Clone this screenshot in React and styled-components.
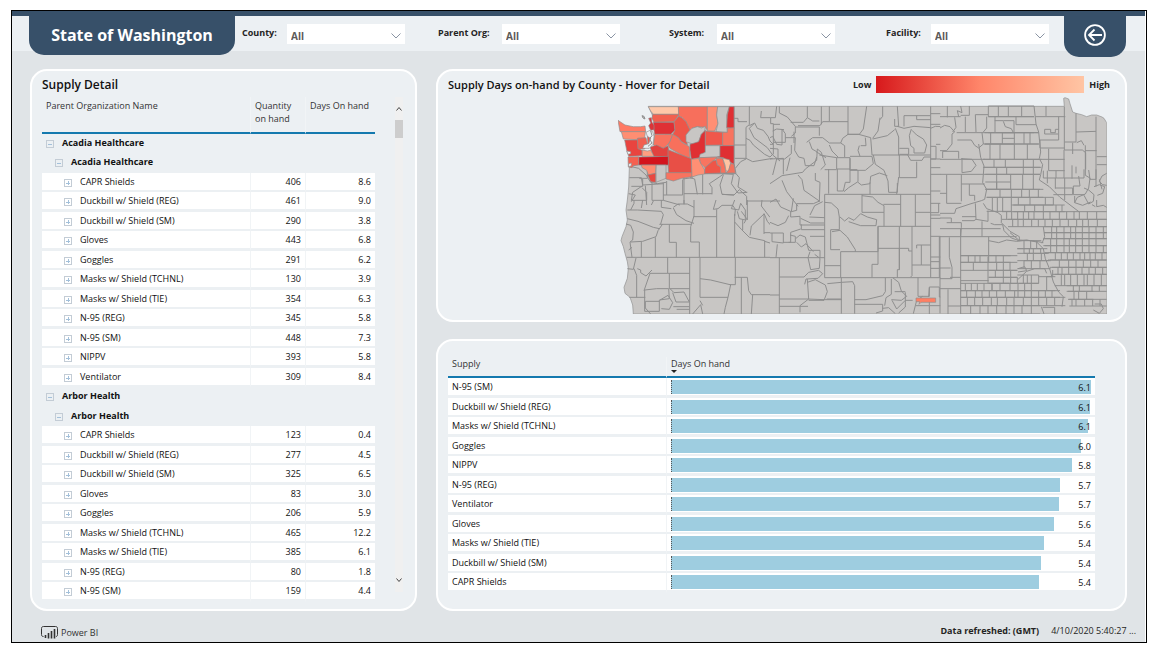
import React from "react";
import styled, { createGlobalStyle } from "styled-components";

const GlobalStyle = createGlobalStyle`
  *, *::before, *::after { box-sizing: border-box; }
  body {
    margin: 0;
    background: #fff;
    color: #252423;
    font-family: "Open Sans", "Noto Sans", sans-serif;
    font-size: 9px;
    line-height: 13px;
  }
  button, select { font: inherit; color: inherit; }
`;

const Frame = styled.div`
  margin: 10px 14px 17px 11px;
  padding-right: 1px;
  border: 1px solid #000;
  background: #fff;
`;

const Report = styled.div`
  background: #e0e4e7;
`;

const Header = styled.header`
  display: flex;
  align-items: flex-start;
  height: 40px;
  padding: 0 19px 0 17px;
  border-top: 5px solid #375069;
  background: #ecf0f3;
`;

const TitleTab = styled.h1`
  flex: 0 0 206px;
  margin: 0;
  border-radius: 0 0 15px 15px;
  background: #375069;
  color: #fff;
  font-size: 16px;
  font-weight: 700;
  line-height: 39px;
  text-align: center;
`;

const Filters = styled.form`
  flex: 1;
  display: grid;
  grid-template-columns: 196fr 231fr 217fr 178fr;
  padding-left: 7px;
`;

const Filter = styled.div`
  display: flex;
  align-items: flex-start;
  padding-top: 8px;
`;

const FilterLabel = styled.label`
  flex: 0 0 ${(p) => p.$width}px;
  padding-top: 2px;
  font-weight: 700;
  white-space: nowrap;
`;

const SelectBox = styled.div`
  position: relative;
  flex: 0 0 118px;

  select {
    display: block;
    width: 100%;
    height: 20px;
    padding: 4px 4px 0;
    border: 0;
    border-radius: 0;
    appearance: none;
    background: #fff;
    color: #5c5a58;
    font-size: 10px;
    font-weight: 700;
  }

  svg {
    position: absolute;
    top: 9px;
    right: 4px;
    pointer-events: none;
  }
`;

const BackTab = styled.button`
  flex: 0 0 62px;
  display: flex;
  justify-content: center;
  align-items: center;
  height: 41px;
  padding: 0 0 3px;
  border: 0;
  border-radius: 0 0 15px 15px;
  background: #375069;
`;

const Main = styled.main`
  display: grid;
  grid-template-columns: minmax(0, 387fr) minmax(0, 691fr);
  gap: 19px;
  padding: 18px 18px 0;
`;

const Column = styled.div`
  display: flex;
  flex-direction: column;
  gap: 17px;
`;

const Panel = styled.section`
  padding: ${(p) => p.$pad};
  border: 2px solid #fff;
  border-radius: 17px;
  background: #ecf0f3;
`;

const PanelTitle = styled.h2`
  margin: 0;
  color: #111;
  font-size: ${(p) => p.$size}px;
  font-weight: 600;
  line-height: 16px;
`;

const ScrollArea = styled.div`
  display: flex;
  gap: 20px;
  margin-top: 4px;
`;

const DataTable = styled.table`
  width: 100%;
  table-layout: fixed;
  border-collapse: separate;
  border-spacing: 0;
  color: #111;

  th {
    padding: ${(p) => p.$headPad};
    border-bottom: 2px solid #1479ae;
    color: #333;
    font-weight: 400;
    text-align: left;
    vertical-align: top;
  }

  th:not(:last-child), td:not(:last-child) {
    border-right: 1px solid #f1f4f6;
  }

  td {
    padding: 0 4px;
    border-bottom: 3px solid #ecf0f3;
    background: #fff;
    line-height: 17px;
  }

  tr:nth-child(${(p) => p.$short}) td {
    border-bottom-width: 2px;
  }
`;

const GroupRow = styled.tr`
  font-weight: 700;

  && td {
    background: #ecf0f3;
    border-right-color: #ecf0f3;
  }
`;

const NumberCell = styled.td`
  text-align: right;
`;

const TreeName = styled.div`
  display: flex;
  align-items: center;
  gap: 8px;
  padding-left: ${(p) => (p.$level - 1) * 9}px;
  white-space: nowrap;
`;

const Toggle = styled.button`
  display: flex;
  width: 8px;
  height: 8px;
  margin-top: 3px;
  padding: 0;
  border: 0;
  background: none;
`;

const ScrollBar = styled.div`
  flex: 0 0 8px;
  display: flex;
  flex-direction: column;
  margin-bottom: 10px;
  background: #f0f0f0;
`;

const ScrollButton = styled.button`
  display: flex;
  align-items: center;
  justify-content: center;
  height: 23px;
  padding: 0;
  border: 0;
  background: none;
`;

const ScrollTrack = styled.div`
  flex: 1;
`;

const ScrollThumb = styled.div`
  height: 18px;
  background: #cdcdcd;
`;

const MapHeader = styled.div`
  display: flex;
  justify-content: space-between;
  align-items: center;
  height: 17px;
  margin-bottom: 4px;
  padding-right: 15px;
`;

const Legend = styled.div`
  display: flex;
  align-items: center;
  gap: 5px;
  color: #222;
  font-weight: 700;
`;

const LegendRamp = styled.div`
  width: 208px;
  height: 17px;
  background: linear-gradient(90deg, #d7191c, #ff866a 50%, #ffc5a4);
`;

const MapDrawing = styled.svg`
  display: block;
  width: 489px;
  max-width: 100%;
  margin-left: auto;
  margin-right: 18px;
`;

const SortedLabel = styled.span`
  position: relative;

  &::after {
    content: "";
    position: absolute;
    left: 0;
    top: 13px;
    border: 3px solid transparent;
    border-top-color: #222;
    border-bottom: 0;
  }
`;

const BarCell = styled.td`
  position: relative;
`;

const BarTrack = styled.div`
  height: 17px;
  padding: 2px 0 1px;
`;

const Bar = styled.div`
  height: 14px;
  border-left: 1px dotted #555;
  background: #9ecde0;
`;

const BarValue = styled.span`
  position: absolute;
  top: 1px;
  right: 4px;
`;

const Footer = styled.footer`
  display: flex;
  justify-content: space-between;
  align-items: center;
  height: 31px;
  padding: 7px 9px 0 29px;
`;

const Brand = styled.a`
  display: flex;
  align-items: center;
  gap: 3px;
  padding-top: 4px;
  color: #333;
  text-decoration: none;
`;

const Refreshed = styled.div`
  display: flex;
  gap: 12px;
`;

const filters = [
  ["County:", 45],
  ["Parent Org:", 64],
  ["System:", 48],
  ["Facility:", 45],
];

const detail = [
  ["Acadia Healthcare", [
    ["CAPR Shields", "406", "8.6"],
    ["Duckbill w/ Shield (REG)", "461", "9.0"],
    ["Duckbill w/ Shield (SM)", "290", "3.8"],
    ["Gloves", "443", "6.8"],
    ["Goggles", "291", "6.2"],
    ["Masks w/ Shield (TCHNL)", "130", "3.9"],
    ["Masks w/ Shield (TIE)", "354", "6.3"],
    ["N-95 (REG)", "345", "5.8"],
    ["N-95 (SM)", "448", "7.3"],
    ["NIPPV", "393", "5.8"],
    ["Ventilator", "309", "8.4"],
  ]],
  ["Arbor Health", [
    ["CAPR Shields", "123", "0.4"],
    ["Duckbill w/ Shield (REG)", "277", "4.5"],
    ["Duckbill w/ Shield (SM)", "325", "6.5"],
    ["Gloves", "83", "3.0"],
    ["Goggles", "206", "5.9"],
    ["Masks w/ Shield (TCHNL)", "465", "12.2"],
    ["Masks w/ Shield (TIE)", "385", "6.1"],
    ["N-95 (REG)", "80", "1.8"],
    ["N-95 (SM)", "159", "4.4"],
  ]],
];

const supplies = [
  ["N-95 (SM)", "6.1", 100],
  ["Duckbill w/ Shield (REG)", "6.1", 99.8],
  ["Masks w/ Shield (TCHNL)", "6.1", 99.3],
  ["Goggles", "6.0", 97.6],
  ["NIPPV", "5.8", 95.5],
  ["N-95 (REG)", "5.7", 92.6],
  ["Ventilator", "5.7", 92.4],
  ["Gloves", "5.6", 91.3],
  ["Masks w/ Shield (TIE)", "5.4", 88.8],
  ["Duckbill w/ Shield (SM)", "5.4", 88.2],
  ["CAPR Shields", "5.4", 87.7],
];

/* Washington counties: fill and outline */
const GRAY = "#c8c6c4";
const LINE = "#8e8e8e";
const counties = [
  ["#ffc8a9", "115,35 205,35 208,58 130,58 122,48"],
  ["#f2604f", "128,58 208,58 192,80 132,82 126,70"],
  ["#df3035", "130,82 192,82 195,105 182,118 134,118 131,100"],
  ["#f76f5c", "205,35 292,35 292,105 286,97 262,95 246,100 240,108 228,80 216,67 206,64"],
  ["#ee5548", "192,80 206,64 216,68 228,80 240,106 228,120 232,150 215,140 205,128 188,118 195,105"],
  ["#ff8f74", "292,35 323,35 320,60 324,85 314,108 292,108"],
  [GRAY, "323,35 358,35 350,60 352,112 318,110 324,85 320,60"],
  ["#df2f33", "358,35 372,35 372,100 350,98 352,60"],
  [GRAY, "228,120 240,106 246,100 262,95 275,99 286,94 284,108 274,118 266,140 250,148 228,140"],
  ["#df2f33", "286,106 286,170 268,188 244,193 240,165 240,148 266,140 274,118"],
  ["#f0574b", "286,108 338,112 338,150 286,151"],
  ["#f8735f", "338,112 352,112 352,100 372,98 372,152 338,152"],
  [GRAY, "286,152 330,152 330,186 268,188 270,178 286,172"],
  ["#df2f33", "330,152 372,152 372,208 358,200 340,188 322,186 330,184"],
  ["#f8735f", "134,118 182,118 188,118 180,140 172,150 160,160 130,150"],
  ["#e2423f", "120,156 140,150 160,160 174,152 178,180 172,185 130,184"],
  ["#f8705c", "188,118 205,128 215,142 238,155 240,190 215,180 180,160 174,150 180,140"],
  ["#e84f46", "174,164 215,180 244,191 246,234 176,234 174,205"],
  ["#d3141d", "86,186 175,184 175,210 86,210"],
  ["#ff9e80", "96,165 112,168 122,166 132,184 96,184"],
  [GRAY, "138,210 168,210 168,250 138,262"],
  ["#ff8c72", "94,210 138,210 136,235 115,240 110,226 96,218"],
  ["#e84840", "113,240 137,235 137,262 122,260"],
  ["#f8735f", "168,233 246,233 246,245 215,250 190,258 168,252"],
  ["#ff8f74", "244,193 266,190 272,205 284,225 284,237 264,240 246,246"],
  ["#f87460", "268,188 322,186 308,200 285,218 272,205"],
  ["#ef5548", "285,218 308,198 318,195 322,210 332,215 332,234 284,236"],
  ["#f8705c", "318,190 338,190 345,215 348,234 332,234 332,215 322,210"],
  ["#ffc3a2", "338,190 358,194 362,205 356,228 348,228 345,210"],
  ["#f4705c", "362,205 372,208 376,234 348,234 356,226"],
  ["#ff7a64", "24,76 45,90 70,95 92,95 105,93 107,110 30,110"],
  ["#ff8e72", "34,110 106,110 104,130 84,130 82,134 40,132"],
  ["#e9443f", "44,135 84,135 84,160 96,166 96,182 56,184 50,165"],
  ["#f25f50", "82,130 108,128 112,145 104,162 84,162"],
  ["#f0564b", "112,122 126,118 128,145 114,150"],
  ["#f5604f", "54,186 86,185 86,210 70,212 66,218 55,216"],
  ["#dc3438", "116,70 124,68 126,82 132,90 132,104 122,106 116,92 122,84"],
];

const sound = [
  "120,106 128,110 132,124 129,148 118,160 98,160 102,150 116,146 122,130 112,124 108,112 116,108",
  "50,168 62,170 62,176 54,178",
  "56,206 64,204 64,212 56,216",
];

/* county lines of the northern coast and Idaho panhandle */
const northwestLines = `
M372,34V206L378,236H284
M372,70h12v10h27 M418,34v55l-10,8v55 M408,150h-36 M408,152v38h-34
M418,92l16,-8 8,16 18,6 14,18 6,14 10,10 v30 M480,148h10v-62h-8v-18h-30l2,-20 M500,34l-4,34h-14 M510,88h-20
M408,130l12,6 10,14 34,28 16,8 8,-8 M432,86l-14,14 14,28 40,30 16,22
M408,190l20,10 60,-10 M376,220l16,-20 16,-8 M488,180l22,18
M60,214l26,6 22,20 14,22 20,4 26,-4 M88,250h24v-24 M58,248h36l4,22 64,-4
M64,274h34v-22 M98,272l-30,20 -4,24h46v-24l-14,-14 M106,272l4,58 M126,264v52h34v-50 M160,300h58v-46 M170,258v42
M218,252l30,-4 M222,248v80 M222,296h84 M240,248l14,4 8,46 M278,238v60 M306,298v-20l-8,-12 30,-20 14,-10 28,2
M340,240l-10,30 6,28 36,2 16,-16 22,20v26 M370,238l-6,28 20,28 28,-2 M372,300l-36,-2 M412,318h98
M378,236l10,12 -4,28 26,16 M160,316l50,14 M56,296l20,4 M76,300l-12,20 M130,318l-6,12`;

/* Oregon, northern California, Nevada and southern Idaho */
const southwestLines = `
M50,172H643 M52,30h30l72,4 6,10 -8,28 M52,56l32,8 46,18 18,4 M72,0v10l-10,20 M98,0l-4,24 M154,0v22l30,4
M48,72l14,4 8,20 -2,24 -8,6 M62,126l36,-2 40,-14 6,-18 14,-20 M94,126v46 M136,112v60 M60,126l6,46 M56,150l10,-8
M148,73h96 M178,73v54h21v45 M252,48l-10,32v46h26v46 M190,22l14,-10h28l20,10 M190,24l10,20 28,18 24,8 M252,0v50h68
M222,0v12 M318,0l-8,28 14,-2 12,-10h32l8,12 -2,20 M320,28v144 M374,42v130 M374,66l20,22 24,24 46,10v50
M374,0l-10,26 22,4 6,-20 14,20v30l-18,-4 -6,-22 M394,34l16,22 -8,14 M398,60v30 M420,106l4,-28 38,-36v60
M412,0v60 M456,0l-2,18 26,34 20,10 40,6 M462,40l10,24 24,28 M462,98h72 M464,124l44,14
M173,172v48h66 M173,220h-54 M126,210l-18,18 -16,-10v-8l-10,-4 M52,206l18,2 8,-34 M72,206l8,20v66 M58,292h48 M102,272l18,-52
M239,172v170 M270,172v120 M270,236l32,4 58,14h16v-82 M270,292h84l8,-38 M354,292l-8,30 -4,20 M374,232h38l4,40 8,12h84 M394,232v110
M428,284l-4,58 M178,220v46h62 M104,270l36,-4 36,0 2,30 -30,4v34h-44v-64
M106,304h42 M106,304v20l16,18 M150,300l24,-14 14,22 -10,20 -24,-2 M180,266l12,12 30,-2 16,30h-40l-10,-28 M190,320h48 M200,328h38
M248,342l24,-28 6,28 M278,316l-8,-14`;

/* Montana, Wyoming, Utah and the western Dakotas */
const centralLines = `
M28,34v20l24,12 24,28v20l-12,10 M112,34v34l16,10h20 M154,34v54 M178,34v46h-20l-8,12H84 M62,82h38l12,-14 M76,96h72v26 M234,34v84 M178,80h56
M290,34l-10,68 -12,16h-34l-16,12 -6,14h-34l-20,-16 -30,0 -18,14 M232,118h34l36,10 4,52h82 M330,68l-6,40 -16,22 M338,34v30l-8,10 M382,34l4,60h-12v-22
M402,62h78 M402,62v32 M440,62v12h42 M382,94l20,6 30,-6 50,4 M376,100l10,26v54h96 M374,104l-22,18 -44,10 M482,34v514 M482,56h58 M482,88h58 M482,100l14,-6 44,2
M424,102l-6,20 4,30 10,8v14h32l6,-24 -10,-18 -20,-12 -14,-14 M388,160h28v18h-28 M412,178l10,18h34l6,-10h20 M388,180v68 M388,248h52v-48
M164,298h318 M164,298v250 M164,548h376 M380,298l6,-52 M310,180l6,28 26,18 12,32 2,34h26v-28 M240,188v36h22 M240,184l66,0 4,22 -24,20h-46v-36
M200,188v34h40 M148,180l52,8h40 M138,170l30,18 M176,222v74 M202,222v66h18l6,-26h14v-40 M264,226v34l-28,18 -14,12 M264,262l10,8 26,-4 2,-22 26,-10 24,8
M300,262v36 M164,224h36 M118,140l8,22 14,8 M178,150l8,18 18,18 M212,144l12,8v34 M268,152l-4,14 6,18 M272,152h16l-2,-24
M0,128l8,-4 12,24 16,2v-48l10,14v26h-36 M8,108l12,-6 22,2 M46,128h30l-2,38 12,20 16,4 4,22h26l8,-26 M72,110v34 M0,160l24,2v30h20l20,-16v-26
M0,192l40,-2v48 M8,240l12,-48 M60,188l-10,40 M0,266l36,-24 62,-10 8,-10 34,-26 2,-34 12,10 12,38 -14,14 M84,240l12,14 6,32 46,32 2,-56 -14,-6v-22
M36,256l14,34 34,44 M0,322l18,-10 14,24 32,14 6,-40 M64,350l16,-4v-20h50l14,-6 6,-2 M62,350v16l28,-2v26h74 M118,366l46,2 M120,360l14,-28 24,-12 M94,388v16h70
M92,370l30,14h40 M56,362l-10,20 -22,10 -24,-10 M0,414h40v30l-34,-4v-26 M40,442h22v-30l30,-10 M60,420l16,4v18h-20 M22,448l-4,40 M80,442l14,14 14,-10 22,24
M78,430l12,-10 16,6 10,40h34v22 M120,424h44 M28,488v168 M0,488h164 M120,470l-6,18 8,36 26,-4 2,-30 -16,-12 M28,546h74l14,-14 30,-6 12,10 -14,14 -36,2 -4,16
M164,322l20,2 20,18 4,24v38h-26v60h28 M210,366l14,12 12,-10 16,8 20,-20 20,10 28,8 -2,18h-46l-36,-12 M186,410l24,-4 22,20 24,38v6 M212,470h112v-76h158
M212,470v78 M164,512h48 M276,298v54h66v42 M276,302l32,4 16,16 18,10v20 M340,328h52 M392,298v96 M436,298v96 M436,352h46 M324,394v114h-18v40
M324,460h92v8h10v-74 M388,394v130h-6v24 M440,460v-10h42 M426,468v74l-4,4 M454,450v60h-28 M454,510h28 M388,460v64
M482,154h16v38h-16 M498,148h30v44 M482,192h58 M482,238h48v50h-48 M482,325h58 M506,325v28h-24 M482,360h58 M482,424h58 M508,424v124 M482,486h58
M482,500h28 M482,520h58 M528,238v-20h-46 M482,370h58 M112,552l4,60 -26,20v20 M112,562l24,-8 30,16 6,20 -10,26h-46 M28,612h86l48,2 M28,634h86
M214,548v108 M172,566l42,-4 34,-2 6,12v84 M170,612h44 M160,614h56 M254,614h34l50,-12 8,-12v-42 M254,628h84v20l-20,6 M364,552v46l-16,10 -4,24
M368,548l18,14 8,26 16,16 -16,12 -30,-2 M374,590h32 M366,616l14,26 26,-26h22 M406,592v44l-20,18 M444,548v56h34v-28h30v30h32 M476,606l2,-28 M430,656l10,-40 18,-12
M478,610v22h62 M478,632v26 M438,632h40 M0,600h28 M338,640l18,-2 20,18`;

/* Dakotas, Minnesota, Nebraska and Iowa: irregular county lines */
const easternLines = `
M0,80h62 M22,48v34 M62,48l4,20 -14,-6 4,18 M44,82l4,30 -10,14 M0,114l14,-8 16,4 14,16 -8,6v30l-16,20H0 M76,80v46 M88,48v28H62 M106,74h38 M106,74l2,52
M140,80v34l-10,12 M50,128h246 M126,128l4,34 -14,12 -12,-8 -10,-16H52 M116,162l6,40 10,26 -4,50 12,20 -6,30 -10,4 -34,10 -42,14 -4,14H0 M8,184h48v22 M8,184v20
M64,206l32,2 12,18 -14,18 -28,4v-44 M0,208h134 M0,253h130 M20,254v86h44 M64,254v80 M64,282h70 M88,282v34h16v16 M0,310h20 M134,162h90 M190,94l6,16 18,6 6,12 M164,92h26
M282,48l6,54 8,24 6,60 -4,20 10,18 -6,30 -4,16 30,20 32,32 58,44 M190,92h32v36 M228,80v24h60 M286,80h90 M318,48v30 M356,80v70h-58 M314,118h18v10h14v-10h10 M314,118v14h40 M300,150v24h74
M373,50v130 M373,180h54l10,8v50 M408,70v56l60,-2 M408,126v30h-34 M398,158v34 M410,158l14,-6 8,14 M436,166v90 M468,80v210 M436,182h34 M470,200h30 M470,224h30
M300,208h74 M326,176v66h48 M372,180v84 M310,242v22h62 M348,242v22 M346,264v32 M372,264h60v-26 M396,226v40 M408,230v20 M416,258l4,30h-20v26h34
M436,256l14,8 -4,30 -10,18 -24,10 -8,16 24,8 24,-10 M432,294l14,6 16,14 -2,20 -14,8 -14,-26 M462,290l16,-6 16,6 -6,20 -16,6 M478,268l8,30 M500,250l-14,8 -8,16 10,10 12,2
M446,240l4,28h18v-30 M340,314h58 M346,294h52v20 M374,264v66 M322,280v-38 M404,338v-20 M470,330v20l20,-4 10,6 M456,344l10,6
M130,340l10,16 34,12 10,8v22l26,26 28,16v12l-24,-8 -22,-22 -4,-18h-24l-12,-4 M106,340l2,48 36,6v-32 M108,388l-6,4H66 M66,380h42 M20,398h44v14l-2,26 M0,384h34v14 M0,440h230 M0,416H182 M62,416v256
M146,440v56 M146,452l30,6 24,-8 30,4 30,-4 30,6 20,20 6,30 14,34 10,36 16,30 14,14 -4,30 M210,428l26,22 40,2 34,6 M310,410l4,30 -8,20 M62,497h170 M126,394v46
M0,440v230 M28,442v60l8,30v34H0 M0,534h32 M30,562h32 M24,598v74 M0,596h62 M24,648h38 M234,568l26,-24 24,-8h30l6,14 M234,536l20,-6 6,12 -26,4 M144,500v80
M320,560h18v-20 M146,580h62 M62,572h84 M156,580v22 M304,650l8,22 M308,652h36v20 M460,660l18,10 12,-14 -6,-14h-20`;

/* Survey-grid counties: [left, right, top, bottom, vertical lines] */
const grid = [
  [145, 282, 48, 80, [145, 175, 205, 245]],
  [145, 282, 80, 128, [165]],
  [134, 296, 128, 162, [152, 187, 223, 252, 270]],
  [187, 223, 128, 145, []],
  [130, 297, 162, 208, [150, 180, 223, 262]],
  [130, 304, 208, 232, [162, 196, 250, 280]],
  [130, 300, 232, 253, [170, 200, 250, 280]],
  [136, 300, 253, 298, [170, 212, 248, 280]],
  [136, 212, 276, 298, [170]],
  [140, 310, 298, 322, [180, 214, 245, 268, 295]],
  [140, 214, 322, 364, [157, 172, 188, 214]],
  [214, 340, 322, 345, [235, 270, 316, 340]],
  [220, 374, 345, 365, [254, 284, 310, 348, 366]],
  [186, 500, 365, 388, [200, 215, 233, 250, 266, 282, 310, 330, 358, 380, 402, 418, 442, 470]],
  [204, 500, 388, 410, [218, 234, 250, 275, 295, 315, 337, 360, 385, 410, 428, 445, 472]],
  [312, 500, 410, 428, [335, 350, 372, 392, 407, 427, 447, 468, 490]],
  [312, 500, 428, 446, [335, 350, 372, 392, 407, 427, 447, 468, 490]],
  [310, 500, 446, 467, [332, 350, 372, 388, 407, 427, 447, 468]],
  [314, 500, 467, 488, [332, 350, 372, 388, 407, 427, 447, 468, 490]],
  [324, 500, 488, 510, [346, 364, 382, 400, 420, 434, 450, 466, 486]],
  [330, 500, 510, 532, [358, 386, 408, 430, 452, 474]],
  [336, 500, 532, 553, [354, 366, 386, 408, 426, 447, 466, 488]],
  [344, 500, 553, 587, [364, 374, 392, 412, 432, 442, 462, 484]],
  [380, 436, 587, 604, [400, 418]],
  [384, 460, 604, 628, [402, 416, 440]],
  [388, 500, 628, 648, [396, 408, 434, 458, 480]],
  [436, 500, 587, 604, [456, 478]],
  [232, 304, 452, 476, [252, 272, 290]],
  [232, 322, 476, 490, [252, 268, 280, 302]],
  [252, 326, 490, 512, [262, 280, 304]],
  [232, 332, 512, 536, [252, 274, 300]],
  [62, 212, 497, 517, [85, 105, 120, 146, 168, 190]],
  [62, 146, 517, 541, [100]],
  [146, 232, 517, 541, [170, 190, 210]],
  [146, 232, 541, 562, [166, 190, 212]],
  [146, 232, 562, 580, [190, 212, 232]],
  [62, 296, 580, 602, [76, 94, 112, 132, 156, 180, 210, 234, 254, 274]],
  [62, 360, 602, 622, [80, 106, 126, 148, 170, 196, 224, 234, 254, 274, 296, 316, 336]],
  [62, 376, 622, 647, [82, 104, 128, 154, 172, 200, 222, 250, 274, 296, 320, 344]],
  [62, 300, 647, 672, [92, 120, 144, 170, 198, 222, 246, 274]],
  [232, 296, 555, 580, [250, 262, 274, 296]],
  [296, 346, 560, 602, [320]],
];

const gridPath = grid
  .map(([l, r, t, b, xs]) => `M${l},${t}H${r}M${l},${b}H${r}` + xs.map((x) => `M${x},${t}V${b}`).join(""))
  .join("");

function CountyMap() {
  return (
    <MapDrawing viewBox="0 0 1467 651" role="img" aria-label="Supply days on-hand by county">
      <defs>
        <clipPath id="west"><rect width="480" height="360" /></clipPath>
        <clipPath id="central"><rect width="511" height="660" /></clipPath>
      </defs>
      <path
        d="M91,28H1339L1337,4 1341,2 1352,6 1356,20 1364,45 1374,49 1391,53 1406,59 1421,54 1436,54 1452,60 1458,64 1464,74 1467,77V651H46L44,624 36,601 21,589 18,571 28,544 31,514 28,494 21,469 16,449 9,431 12,419 24,389 28,369 24,339 28,309 32,270 34,212 60,200 120,190 150,120 110,76 102,52Z"
        fill={GRAY}
        stroke={LINE}
        strokeWidth="2"
      />
      <g fill="none" stroke={LINE} strokeWidth="3" strokeLinejoin="round">
        <g transform="translate(-24 -6)">
          <path d={northwestLines} />
          {counties.map(([fill, points]) => (
            <polygon key={points} points={points} fill={fill} strokeWidth="2" />
          ))}
          {sound.map((points) => (
            <polygon key={points} points={points} fill="#ecf0f3" strokeWidth="2" />
          ))}
          <path d="M96,62l6,2 3,8 -6,-3z" fill={GRAY} />
          <path d="M122,108l4,14 -8,10 8,12 -12,10" />
        </g>
        <g transform="translate(-24 309)">
          <path d={southwestLines} clipPath="url(#west)" />
        </g>
        <g transform="translate(456 -6)">
          <path d={centralLines} clipPath="url(#central)" />
          <path d="M438,609h59v13h-44l-6,6 2,-8h-11z" fill="#ff7f63" strokeWidth="2" />
        </g>
        <g transform="translate(966 -21)">
          <path d={easternLines} />
          <path d={gridPath} />
        </g>
      </g>
    </MapDrawing>
  );
}

function TreeCell({ level, open, children }) {
  return (
    <td>
      <TreeName $level={level}>
        <Toggle type="button" aria-label={`${open ? "Collapse" : "Expand"} ${children}`}>
          <svg width="8" height="8" viewBox="0 0 8 8">
            <rect x=".5" y=".5" width="7" height="7" fill="none" stroke="#c3ccd5" />
            <path d={open ? "M2,4.5H6" : "M2,4.5H6M4.5,2V6"} stroke="#a3c0da" />
          </svg>
        </Toggle>
        {children}
      </TreeName>
    </td>
  );
}

function SupplyDetail() {
  return (
    <Panel $pad="6px 12px 7px 10px">
      <PanelTitle $size={12}>Supply Detail</PanelTitle>
      <ScrollArea>
        <DataTable $headPad="2px 4px 7px" $short="odd">
          <colgroup>
            <col />
            <col width="55" />
            <col width="69" />
          </colgroup>
          <thead>
            <tr>
              <th scope="col">Parent Organization Name</th>
              <th scope="col">Quantity on hand</th>
              <th scope="col">Days On hand</th>
            </tr>
          </thead>
          <tbody>
            {detail.map(([org, items]) => (
              <React.Fragment key={org}>
                {[1, 2].map((level) => (
                  <GroupRow key={level}>
                    <TreeCell level={level} open>{org}</TreeCell>
                    <td />
                    <td />
                  </GroupRow>
                ))}
                {items.map(([name, quantity, days]) => (
                  <tr key={name}>
                    <TreeCell level={3}>{name}</TreeCell>
                    <NumberCell>{quantity}</NumberCell>
                    <NumberCell>{days}</NumberCell>
                  </tr>
                ))}
              </React.Fragment>
            ))}
          </tbody>
        </DataTable>
        <ScrollBar>
          <ScrollButton type="button" aria-label="Scroll up">
            <svg width="6" height="5"><path d="M.5,4.5L3,1.5 5.5,4.5" fill="none" stroke="#444" /></svg>
          </ScrollButton>
          <ScrollTrack>
            <ScrollThumb />
          </ScrollTrack>
          <ScrollButton type="button" aria-label="Scroll down">
            <svg width="6" height="5"><path d="M.5,.5L3,3.5 5.5,.5" fill="none" stroke="#444" /></svg>
          </ScrollButton>
        </ScrollBar>
      </ScrollArea>
    </Panel>
  );
}

function SupplyBars() {
  return (
    <Panel $pad="16px 30px 16px 10px">
      <DataTable $headPad="0 4px 6px" $short="even">
        <colgroup>
          <col width="219" />
          <col />
        </colgroup>
        <thead>
          <tr>
            <th scope="col">Supply</th>
            <th scope="col"><SortedLabel>Days On hand</SortedLabel></th>
          </tr>
        </thead>
        <tbody>
          {supplies.map(([name, days, share]) => (
            <tr key={name}>
              <td>{name}</td>
              <BarCell>
                <BarTrack>
                  <Bar style={{ width: `${share}%` }} />
                </BarTrack>
                <BarValue>{days}</BarValue>
              </BarCell>
            </tr>
          ))}
        </tbody>
      </DataTable>
    </Panel>
  );
}

export default function App() {
  return (
    <>
      <GlobalStyle />
      <Frame>
        <Report>
          <Header>
            <TitleTab>State of Washington</TitleTab>
            <Filters>
              {filters.map(([label, width]) => (
                <Filter key={label}>
                  <FilterLabel htmlFor={label} $width={width}>{label}</FilterLabel>
                  <SelectBox>
                    <select id={label}><option>All</option></select>
                    <svg width="10" height="6" viewBox="0 0 10 6" aria-hidden="true">
                      <path d="M.5,.5L5,5 9.5,.5" fill="none" stroke="#8a94a3" />
                    </svg>
                  </SelectBox>
                </Filter>
              ))}
            </Filters>
            <BackTab type="button" aria-label="Back">
              <svg width="22" height="22" viewBox="0 0 22 22" fill="none" stroke="#fff" strokeWidth="1.8">
                <circle cx="11" cy="11" r="9.9" />
                <path d="M18,11H5.5M10.5,5.5L5,11 10.5,16.5" />
              </svg>
            </BackTab>
          </Header>
          <Main>
            <SupplyDetail />
            <Column>
              <Panel $pad="5px 0 6px 10px">
                <MapHeader>
                  <PanelTitle $size={11}>Supply Days on-hand by County - Hover for Detail</PanelTitle>
                  <Legend>
                    Low
                    <LegendRamp />
                    High
                  </Legend>
                </MapHeader>
                <CountyMap />
              </Panel>
              <SupplyBars />
            </Column>
          </Main>
          <Footer>
            <Brand href="#">
              <svg width="17" height="13" viewBox="0 0 17 13" fill="none" stroke="#333">
                <path d="M2.5,10.5C1,10.5 .5,9.8 .5,8.5V2.5C.5,1.2 1.2,.5 2.5,.5H14.5C15.8,.5 16.5,1.2 16.5,2.5V8.5C16.5,9.8 16,10.5 15,10.5" />
                <path d="M4.5,9V12M7.5,7V12.5M10.5,5V12.5M13.5,3V12.5" strokeWidth="1.6" />
              </svg>
              Power BI
            </Brand>
            <Refreshed>
              <strong>Data refreshed: (GMT)</strong>
              <span>4/10/2020 5:40:27 ...</span>
            </Refreshed>
          </Footer>
        </Report>
      </Frame>
    </>
  );
}
